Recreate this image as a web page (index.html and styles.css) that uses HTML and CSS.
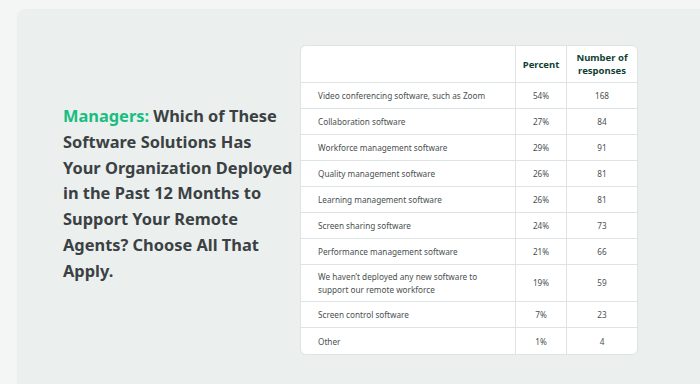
FILE: index.html
```html
<!DOCTYPE html>
<html>
<head>
<meta charset="utf-8">
<link rel="stylesheet" href="styles.css">
</head>
<body>
<div class="panel">
  <div class="title-col">
    <h1 class="title"><span class="accent">Managers:</span> Which of These<br>Software Solutions Has<br>Your Organization Deployed<br>in the Past 12 Months to<br>Support Your Remote<br>Agents? Choose All That<br>Apply.</h1>
  </div>
  <div class="table-wrap">
    <table class="data">
      <thead>
        <tr class="head"><th class="c1"></th><th class="c2">Percent</th><th class="c3">Number of<br>responses</th></tr>
      </thead>
      <tbody>
        <tr><td class="c1">Video conferencing software, such as Zoom</td><td class="c2">54%</td><td class="c3">168</td></tr>
        <tr><td class="c1">Collaboration software</td><td class="c2">27%</td><td class="c3">84</td></tr>
        <tr><td class="c1">Workforce management software</td><td class="c2">29%</td><td class="c3">91</td></tr>
        <tr><td class="c1">Quality management software</td><td class="c2">26%</td><td class="c3">81</td></tr>
        <tr><td class="c1">Learning management software</td><td class="c2">26%</td><td class="c3">81</td></tr>
        <tr><td class="c1">Screen sharing software</td><td class="c2">24%</td><td class="c3">73</td></tr>
        <tr><td class="c1">Performance management software</td><td class="c2">21%</td><td class="c3">66</td></tr>
        <tr class="tall"><td class="c1">We haven’t deployed any new software to<br>support our remote workforce</td><td class="c2">19%</td><td class="c3">59</td></tr>
        <tr><td class="c1">Screen control software</td><td class="c2">7%</td><td class="c3">23</td></tr>
        <tr class="last"><td class="c1">Other</td><td class="c2">1%</td><td class="c3">4</td></tr>
      </tbody>
    </table>
  </div>
</div>
</body>
</html>
```
FILE: styles.css
```css
html, body {
  margin: 0;
  padding: 0;
}
body {
  background: #f4f6f5;
  width: 700px;
  height: 384px;
  overflow: hidden;
  font-family: "Noto Sans", Lato, sans-serif;
}
.panel {
  margin: 9px 0 0 17px;
  height: 375px;
  background: #ebf0ef;
  border-radius: 8px 0 0 0;
  display: flex;
  align-items: flex-start;
}
.title-col {
  width: 237px;
  padding-left: 46px;
  padding-top: 94px;
}
.title {
  margin: 0;
  font-size: 16.4px;
  line-height: 25.8px;
  font-weight: 700;
  color: #3b4143;
  white-space: nowrap;
}
.accent {
  color: #19bd7f;
}
.table-wrap {
  margin-top: 36px;
}
.data {
  border-collapse: separate;
  border-spacing: 0;
  background: #fff;
  border: 1px solid #dde4e3;
  border-radius: 6px;
  width: 337px;
  table-layout: fixed;
}
.data th, .data td {
  border-right: 1px solid #dde4e3;
  border-bottom: 1px solid #dde4e3;
  padding: 0;
  vertical-align: middle;
}
.data tr > :last-child {
  border-right: none;
}
.data tr.last td {
  border-bottom: none;
}
.c1 { width: 214px; }
.c2 { width: 50px; }
.c3 { width: 70px; }
.data th {
  height: 36px;
  color: #123f35;
  font-size: 9.5px;
  line-height: 13px;
  font-weight: 700;
  text-align: center;
}
.data td {
  height: 25px;
  font-size: 8.2px;
  color: #4a4f50;
}
.data td.c1 {
  padding-left: 17px;
  text-align: left;
}
.data td.c2, .data td.c3 {
  text-align: center;
}
.data tr.tall td {
  height: 36px;
  line-height: 13.5px;
}
.data tr.last td {
  height: 26px;
}
```
